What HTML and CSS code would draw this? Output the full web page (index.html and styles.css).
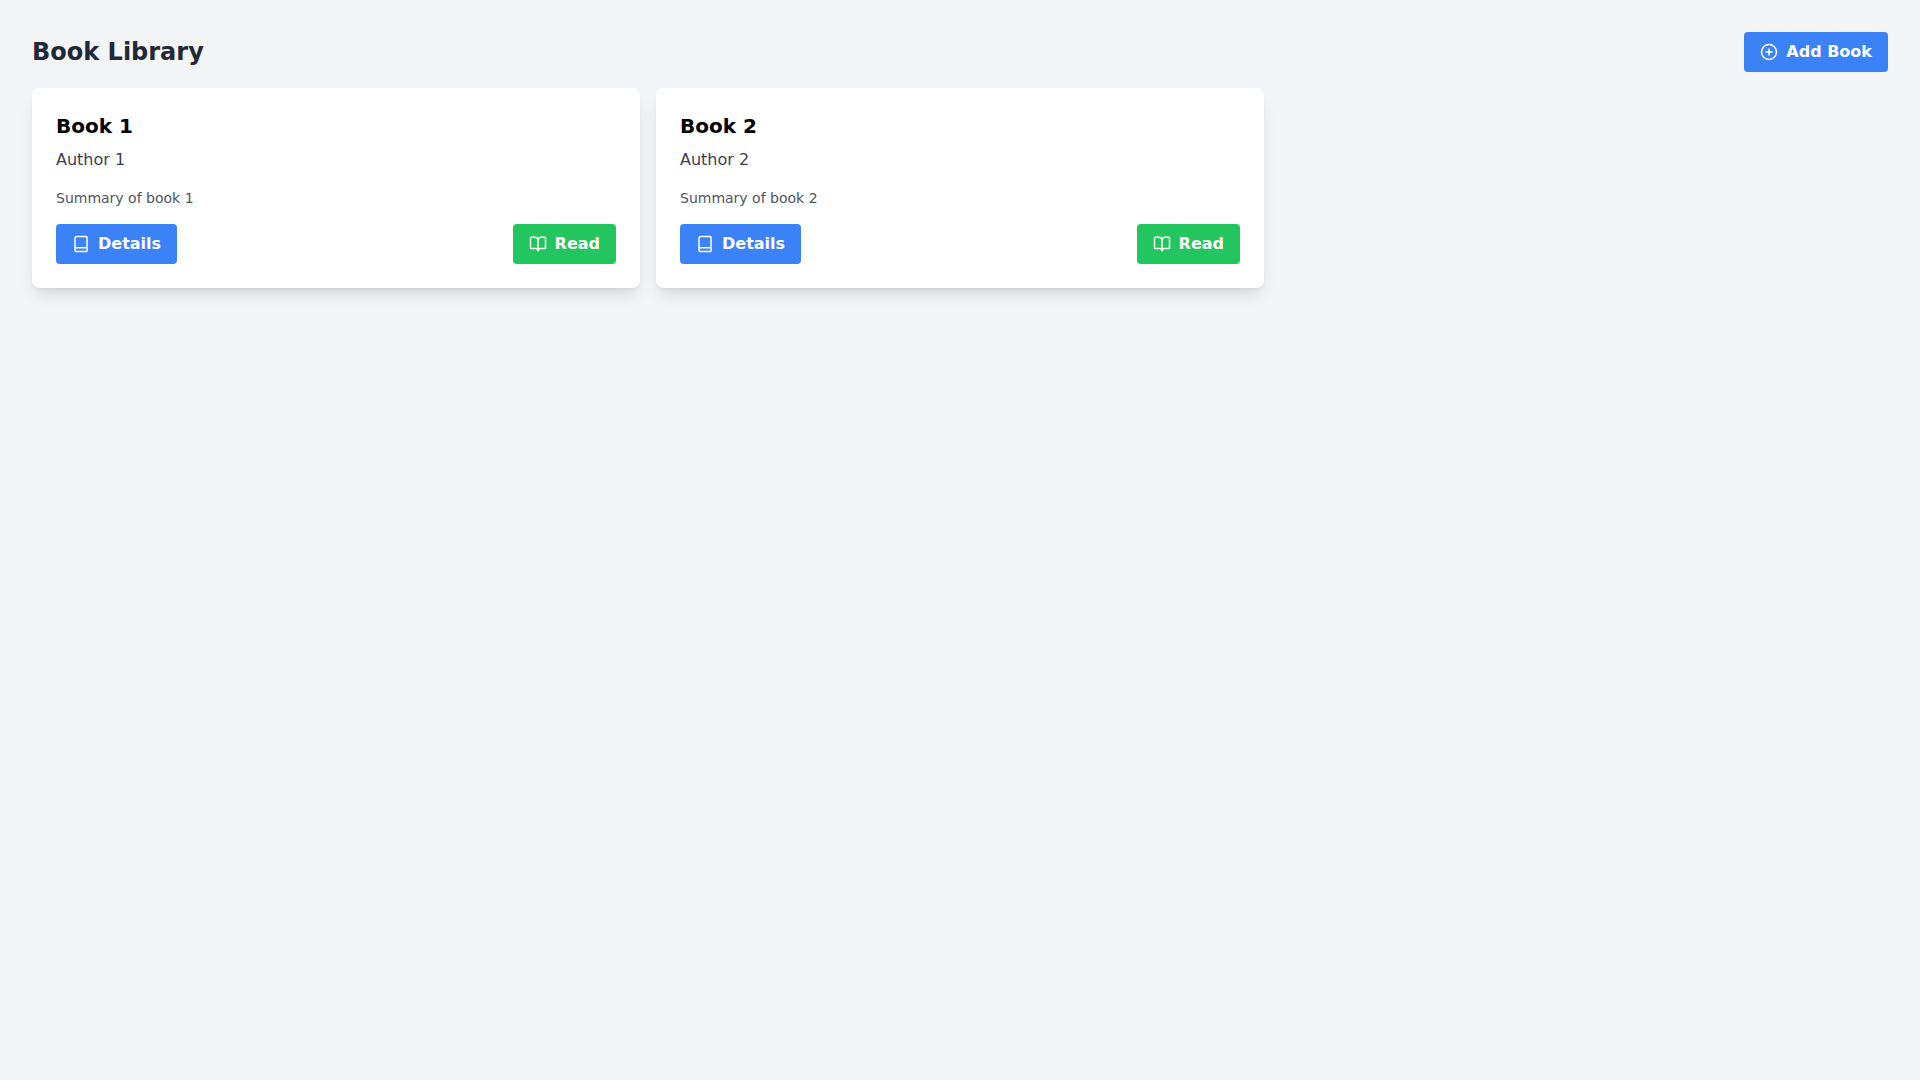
FILE: index.html
```html
<!DOCTYPE html>
<html lang="en">
<head>
  <meta charset="utf-8">
  <meta name="viewport" content="width=device-width, initial-scale=1">
  <title>Book Library</title>
  <link rel="stylesheet" href="styles.css">
</head>
<body>
  <svg class="sprite" aria-hidden="true">
    <symbol id="plus-circle" viewBox="0 0 24 24"><circle cx="12" cy="12" r="10"/><path d="M8 12h8M12 8v8"/></symbol>
    <symbol id="book" viewBox="0 0 24 24"><path d="M4 19.5v-15A2.5 2.5 0 0 1 6.5 2H19a1 1 0 0 1 1 1v18a1 1 0 0 1-1 1H6.5a1 1 0 0 1 0-5H20"/></symbol>
    <symbol id="book-open" viewBox="0 0 24 24"><path d="M12 7v14"/><path d="M3 18a1 1 0 0 1-1-1V4a1 1 0 0 1 1-1h5a4 4 0 0 1 4 4 4 4 0 0 1 4-4h5a1 1 0 0 1 1 1v13a1 1 0 0 1-1 1h-6a3 3 0 0 0-3 3 3 3 0 0 0-3-3z"/></symbol>
  </svg>
  <header class="header">
    <h1 class="title">Book Library</h1>
    <button class="button button-blue" type="button"><svg class="icon" aria-hidden="true"><use href="#plus-circle"/></svg>Add Book</button>
  </header>
  <main class="books">
    <article class="card">
      <h2 class="card-title">Book 1</h2>
      <p class="author">Author 1</p>
      <p class="summary">Summary of book 1</p>
      <div class="actions">
        <button class="button button-blue" type="button"><svg class="icon" aria-hidden="true"><use href="#book"/></svg>Details</button>
        <button class="button button-green" type="button"><svg class="icon" aria-hidden="true"><use href="#book-open"/></svg>Read</button>
      </div>
    </article>
    <article class="card">
      <h2 class="card-title">Book 2</h2>
      <p class="author">Author 2</p>
      <p class="summary">Summary of book 2</p>
      <div class="actions">
        <button class="button button-blue" type="button"><svg class="icon" aria-hidden="true"><use href="#book"/></svg>Details</button>
        <button class="button button-green" type="button"><svg class="icon" aria-hidden="true"><use href="#book-open"/></svg>Read</button>
      </div>
    </article>
  </main>
</body>
</html>
```
FILE: styles.css
```css
* {
  box-sizing: border-box;
  margin: 0;
}

body {
  min-height: 100vh;
  padding: 32px;
  background: #f3f4f6;
  font-family: "DejaVu Sans", sans-serif;
  font-size: 16px;
  line-height: 24px;
}

.sprite {
  display: none;
}

.header {
  display: flex;
  justify-content: space-between;
  align-items: center;
  margin-bottom: 16px;
}

.title {
  color: #1f2937;
  font-size: 24px;
  line-height: 32px;
}

.books {
  display: grid;
  grid-template-columns: repeat(3, 1fr);
  gap: 16px;
}

.card {
  padding: 24px;
  border-radius: 8px;
  background: #fff;
  box-shadow: 0 10px 15px -3px rgb(0 0 0 / 10%), 0 4px 6px -4px rgb(0 0 0 / 10%);
}

.card-title {
  margin-bottom: 8px;
  font-size: 20px;
  line-height: 28px;
}

.author {
  margin-bottom: 16px;
  color: #374151;
}

.summary {
  margin-bottom: 16px;
  color: #4b5563;
  font-size: 14px;
  line-height: 20px;
}

.actions {
  display: flex;
  justify-content: space-between;
}

.button {
  display: flex;
  align-items: center;
  gap: 8px;
  padding: 8px 16px;
  border: 0;
  border-radius: 4px;
  color: #fff;
  font: inherit;
  font-weight: 700;
  cursor: pointer;
}

.button-blue {
  background: #3b82f6;
}

.button-green {
  background: #22c55e;
}

.icon {
  width: 18px;
  height: 18px;
  fill: none;
  stroke: currentColor;
  stroke-width: 2;
  stroke-linecap: round;
  stroke-linejoin: round;
}

@media (max-width: 1023px) {
  .books {
    grid-template-columns: repeat(2, 1fr);
  }
}

@media (max-width: 639px) {
  .books {
    grid-template-columns: 1fr;
  }
}
```
